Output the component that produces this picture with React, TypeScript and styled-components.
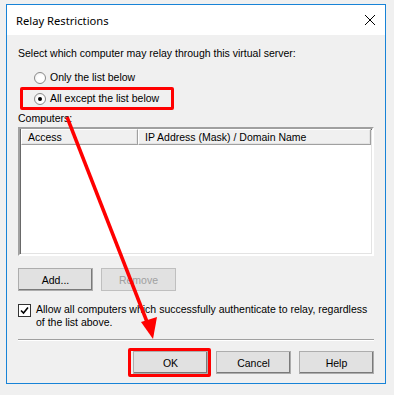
import React from "react";
import styled, { createGlobalStyle, css } from "styled-components";

const Global = createGlobalStyle`
  html, body { margin: 0; padding: 0; background: #f0f0f0; }
  * { box-sizing: border-box; }
`;

const Page = styled.div`
  position: relative;
  width: 394px;
  height: 395px;
  overflow: hidden;
  background: #f0f0f0;
  padding: 4px 0 0 6px;
  font-family: "Liberation Sans", Arial, sans-serif;
  font-size: 10.5px;
  color: #000;
`;

const Dialog = styled.div`
  width: 380px;
  height: 380px;
  border: 1px solid #1883d7;
  background: #f0f0f0;
  display: flex;
  flex-direction: column;
`;

const TitleBar = styled.div`
  flex: none;
  height: 30px;
  background: #fff;
  display: flex;
  align-items: center;
  justify-content: space-between;
  padding: 0 9px 0 9px;
`;

const Title = styled.div`
  font-family: "Noto Sans", "Open Sans", sans-serif;
  font-size: 11.2px;
  color: #000;
`;

const Body = styled.div`
  flex: 1;
  display: flex;
  flex-direction: column;
  padding: 12px 11px 0 11px;
  line-height: 13px;
`;

const Text = styled.div<{ $mt?: number }>`
  margin-top: ${(p) => p.$mt ?? 0}px;
  white-space: nowrap;
`;

const RadioGroup = styled.div`
  display: flex;
  flex-direction: column;
  align-items: flex-start;
  gap: 8px;
  margin-top: 11px;
  padding-left: 16px;
`;

const highlightBox = css`
  content: "";
  position: absolute;
  border: 3px solid #ff0000;
  border-radius: 2px;
  pointer-events: none;
`;

const RadioRow = styled.label<{ $highlight?: boolean }>`
  position: relative;
  display: inline-flex;
  align-items: center;
  gap: 4px;
  height: 13px;
  white-space: nowrap;
  ${(p) =>
    p.$highlight &&
    css`
      &::after {
        ${highlightBox};
        left: -14px;
        right: -15px;
        top: -5px;
        bottom: -5px;
      }
    `}
`;

const RadioCircle = styled.span<{ $checked?: boolean }>`
  width: 12px;
  height: 12px;
  border-radius: 50%;
  border: 1px solid #8a8a8a;
  background: radial-gradient(circle at 60% 60%, #ffffff 40%, #e8e8e8 100%);
  display: inline-flex;
  align-items: center;
  justify-content: center;
  &::after {
    content: "";
    width: 4px;
    height: 4px;
    border-radius: 50%;
    background: ${(p) => (p.$checked ? "#000" : "transparent")};
  }
`;

const ListBox = styled.div`
  margin-top: 2px;
  height: 129px;
  background: #fff;
  border-style: solid;
  border-width: 2px;
  border-color: #a0a0a0 #ffffff #ffffff #a0a0a0;
  box-shadow: inset 1px 1px 0 #696969, inset -1px -1px 0 #e3e3e3;
  padding: 0 1px 1px 1px;
  display: flex;
  flex-direction: column;
`;

const HeaderRow = styled.div`
  display: flex;
  height: 16px;
  background: #f0f0f0;
`;

const HeaderCell = styled.div<{ $w?: number }>`
  ${(p) => (p.$w ? `width: ${p.$w}px;` : "flex: 1;")}
  height: 16px;
  line-height: 14px;
  padding-left: 6px;
  white-space: nowrap;
  border-top: 1px solid #ffffff;
  border-left: 1px solid #ffffff;
  border-right: 1px solid #a0a0a0;
  border-bottom: 1px solid #a0a0a0;
  box-shadow: inset -1px -1px 0 #e3e3e3;
`;

const ButtonRow = styled.div<{ $mt: number; $end?: boolean }>`
  display: flex;
  gap: 8px;
  margin-top: ${(p) => p.$mt}px;
  justify-content: ${(p) => (p.$end ? "flex-end" : "flex-start")};
`;

const Button = styled.button<{ $disabled?: boolean; $highlight?: boolean }>`
  position: relative;
  width: 75px;
  height: 23px;
  padding: 0;
  font-family: "Liberation Sans", Arial, sans-serif;
  font-size: 10.5px;
  background: #e1e1e1;
  color: ${(p) => (p.$disabled ? "#a0a0a0" : "#000")};
  border: 1px solid ${(p) => (p.$disabled ? "#bfbfbf" : "#adadad")};
  box-shadow: ${(p) =>
    p.$disabled ? "none" : "inset -1px -1px 0 #7a7a7a"};
  ${(p) =>
    p.$highlight &&
    css`
      &::after {
        ${highlightBox};
        left: -6px;
        right: -4px;
        top: -4px;
        bottom: -4px;
      }
    `}
`;

const CheckRow = styled.div`
  display: flex;
  gap: 5px;
  margin-top: 12px;
  align-items: flex-start;
`;

const CheckBox = styled.span`
  flex: none;
  width: 13px;
  height: 13px;
  margin-top: 1px;
  border: 1px solid #333;
  background: #fff;
  display: inline-flex;
  align-items: center;
  justify-content: center;
`;

const CheckText = styled.div`
  line-height: 13px;
  white-space: nowrap;
`;

const Separator = styled.div`
  margin-top: 10px;
  height: 1px;
  background: #a0a0a0;
  box-shadow: 0 1px 0 #ffffff;
`;

const Overlay = styled.svg`
  position: absolute;
  left: 0;
  top: 0;
  width: 394px;
  height: 395px;
  pointer-events: none;
`;

export default function App() {
  return (
    <>
      <Global />
      <Page>
        <Dialog>
          <TitleBar>
            <Title>Relay Restrictions</Title>
            <svg width="12" height="12" viewBox="0 0 12 12">
              <path d="M1 1 L11 11 M11 1 L1 11" stroke="#000" strokeWidth="1" />
            </svg>
          </TitleBar>
          <Body>
            <Text>Select which computer may relay through this virtual server:</Text>
            <RadioGroup>
              <RadioRow>
                <RadioCircle />
                Only the list below
              </RadioRow>
              <RadioRow $highlight>
                <RadioCircle $checked />
                All except the list below
              </RadioRow>
            </RadioGroup>
            <Text $mt={7}>Computers:</Text>
            <ListBox>
              <HeaderRow>
                <HeaderCell $w={117}>Access</HeaderCell>
                <HeaderCell>IP Address (Mask) / Domain Name</HeaderCell>
              </HeaderRow>
            </ListBox>
            <ButtonRow $mt={12}>
              <Button>Add...</Button>
              <Button $disabled>Remove</Button>
            </ButtonRow>
            <CheckRow>
              <CheckBox>
                <svg width="9" height="9" viewBox="0 0 9 9">
                  <path d="M1 4.5 L3.5 7 L8 1.5" stroke="#000" strokeWidth="1.6" fill="none" />
                </svg>
              </CheckBox>
              <CheckText>
                Allow all computers which successfully authenticate to relay, regardless
                <br />
                of the list above.
              </CheckText>
            </CheckRow>
            <Separator />
            <ButtonRow $mt={11} $end>
              <Button $highlight>OK</Button>
              <Button>Cancel</Button>
              <Button>Help</Button>
            </ButtonRow>
          </Body>
        </Dialog>
        <Overlay viewBox="0 0 394 395">
          <line x1="67" y1="117" x2="149" y2="327" stroke="#ff0000" strokeWidth="3.5" />
          <polygon points="141,322 157,317 153,339" fill="#ff0000" />
        </Overlay>
      </Page>
    </>
  );
}
